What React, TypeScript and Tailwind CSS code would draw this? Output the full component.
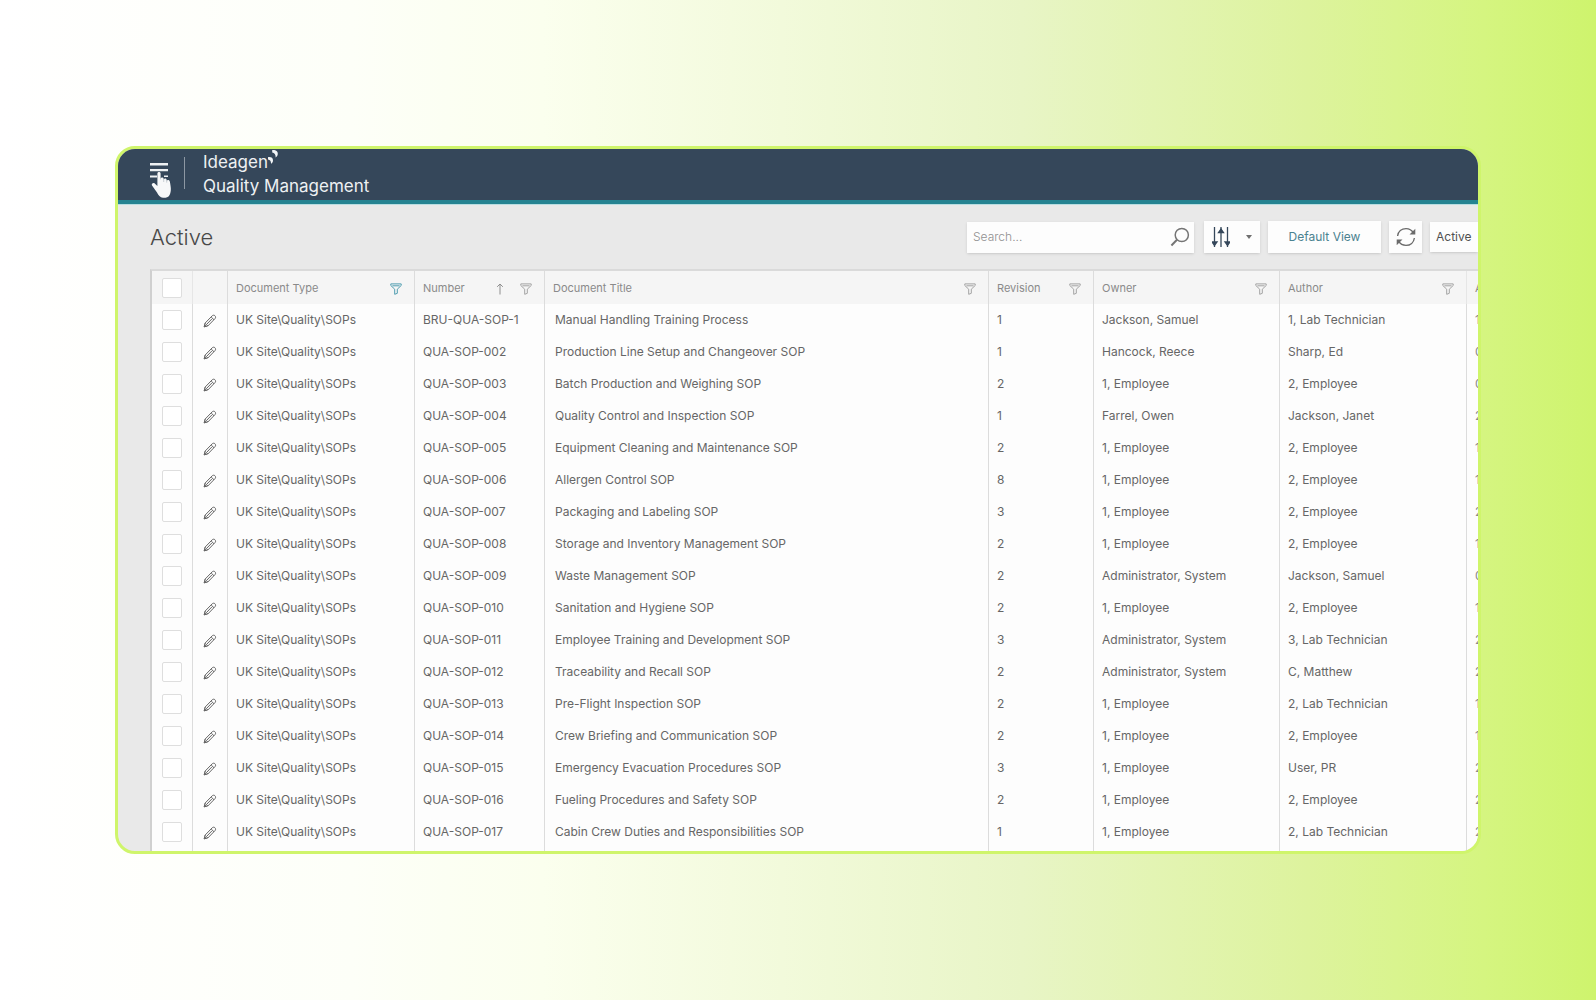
import type { ReactNode } from "react";

type Row = [title: string, revision: string, owner: string, author: string, next: string];

const rows: Row[] = [
  ["Manual Handling Training Process", "1", "Jackson, Samuel", "1, Lab Technician", "1"],
  ["Production Line Setup and Changeover SOP", "1", "Hancock, Reece", "Sharp, Ed", "0"],
  ["Batch Production and Weighing SOP", "2", "1, Employee", "2, Employee", "0"],
  ["Quality Control and Inspection SOP", "1", "Farrel, Owen", "Jackson, Janet", "2"],
  ["Equipment Cleaning and Maintenance SOP", "2", "1, Employee", "2, Employee", "1"],
  ["Allergen Control SOP", "8", "1, Employee", "2, Employee", "1"],
  ["Packaging and Labeling SOP", "3", "1, Employee", "2, Employee", "2"],
  ["Storage and Inventory Management SOP", "2", "1, Employee", "2, Employee", "1"],
  ["Waste Management SOP", "2", "Administrator, System", "Jackson, Samuel", "0"],
  ["Sanitation and Hygiene SOP", "2", "1, Employee", "2, Employee", "1"],
  ["Employee Training and Development SOP", "3", "Administrator, System", "3, Lab Technician", "2"],
  ["Traceability and Recall SOP", "2", "Administrator, System", "C, Matthew", "2"],
  ["Pre-Flight Inspection SOP", "2", "1, Employee", "2, Lab Technician", "1"],
  ["Crew Briefing and Communication SOP", "2", "1, Employee", "2, Employee", "1"],
  ["Emergency Evacuation Procedures SOP", "3", "1, Employee", "User, PR", "2"],
  ["Fueling Procedures and Safety SOP", "2", "1, Employee", "2, Employee", "2"],
  ["Cabin Crew Duties and Responsibilities SOP", "1", "1, Employee", "2, Lab Technician", "2"],
];

const documentNumber = (index: number) =>
  index === 0 ? "BRU-QUA-SOP-1" : `QUA-SOP-${String(index + 1).padStart(3, "0")}`;

function Funnel({ active = false }: { active?: boolean }) {
  return (
    <svg
      viewBox="0 0 12 12"
      className={active ? "size-3 text-[#4f9db0]" : "size-3 text-[#a3a3a3]"}
      fill="none"
      stroke="currentColor"
      aria-hidden="true"
    >
      <path d="M.8.9h10.4v1.6L7.3 6.2v4.1l-2.6 1V6.2L.8 2.5z" />
      <path d="M2.4 2.8h7.2" />
    </svg>
  );
}

function SortArrow() {
  return (
    <svg viewBox="0 0 8 12" className="h-3 w-2 text-[#8e8e8e]" fill="none" stroke="currentColor" aria-hidden="true">
      <path d="M4 11.5V1M1.2 3.8 4 1l2.8 2.8" />
    </svg>
  );
}

function Pencil() {
  return (
    <svg viewBox="0 0 14 14" className="size-3.5" fill="none" stroke="currentColor" strokeLinejoin="round" aria-hidden="true">
      <path d="M1.2 12.8 2 9.2l7.2-7.4c.8-.8 2-.8 2.8 0s.8 2 0 2.8L4.8 12z" />
      <path d="m8.2 3 2.8 2.8M4 10l5-5.2M2 9.2 4.8 12" />
      <path d="m1.2 12.8.5-1.9 1.5 1.4z" fill="currentColor" />
    </svg>
  );
}

function MenuWithPointer() {
  return (
    <svg viewBox="0 0 22 36" className="h-9 w-[22px]" aria-hidden="true">
      <path d="M0 0h18v2.4H0zM0 6h18v2.2H0zM0 12.4h7v2.2H0zM14 12.4h4v1.6h-4z" fill="#eef1f3" />
      <path
        d="M7.4 10.5c0-2 3.2-2 3.2 0v6.6l.2-1.6c.2-1.5 2.7-1.4 2.8.1l.2.8c.4-1.3 2.6-1.1 2.8.3l.2.9c.6-1.1 2.8-.8 3 .9 1 5 1.900 9.500-.2 13.400-1.400 2.600-4.400 3.200-6.600 2.900-3-.3-4.600-2.400-6-5.200l-5-7.200c-1-1.600 1.400-3.200 2.700-2l2.700 2.700z"
        fill="#f7f8f9"
      />
      <path d="M13.7 16v3M16.7 17v2.6" stroke="#b4bdc5" strokeWidth=".7" />
    </svg>
  );
}

function BrandMark() {
  return (
    <svg viewBox="0 0 10 14" className="h-3.5 w-2.5" fill="#f2f5f7" aria-hidden="true">
      <path d="M4.2 0c3.4-.4 5.700 1 5.600 3.800C9.700 5.600 9 6.700 7.600 7.400 7.800 4.600 6.800 3 4.200 2.400z" />
      <path d="M0 7.200c3.200-.4 5.100.800 5 3.200-.1 1.700-.8 2.800-2 3.400.1-2.400-.8-3.800-3-4.200z" />
    </svg>
  );
}

function Magnifier() {
  return (
    <svg viewBox="0 0 20 20" className="size-5 text-[#757575]" fill="none" stroke="currentColor" strokeWidth="1.5" aria-hidden="true">
      <circle cx="11.8" cy="8" r="6.6" />
      <path d="m7 12.8-5.6 5.7" strokeWidth="2" />
    </svg>
  );
}

function Sliders() {
  return (
    <svg viewBox="0 0 18 22" className="h-[22px] w-[18px] text-[#35475a]" fill="none" stroke="currentColor" strokeWidth="1.3" aria-hidden="true">
      <path d="M2.5 1v20M9 1v20M15.5 1v20" />
      <path d="M0 16h5l-2.5 3.5zM6.5 6.5h5L9 3zM13 16h5l-2.5 3.5z" fill="currentColor" />
    </svg>
  );
}

function Refresh() {
  return (
    <svg viewBox="0 0 20 20" className="size-5 text-[#6b6b6b]" fill="none" stroke="currentColor" strokeWidth="1.4" aria-hidden="true">
      <path d="M1.6 9C2.2 4.6 5.6 1.6 10 1.6c3.3 0 5.8 1.5 7.4 4.2M18.4 11c-.6 4.4-4 7.4-8.4 7.4-3.3 0-5.8-1.5-7.4-4.2" />
      <path d="M18.6 3.400v3.400h-3.400zM1.400 16.600v-3.400h3.400z" fill="currentColor" />
    </svg>
  );
}

function HeaderCell({ label, children }: { label: string; children?: ReactNode }) {
  return (
    <th scope="col" className="border-l border-[#dcdcdc] pt-0.5 pl-2 pr-3 font-normal">
      <div className="flex items-center justify-between">
        <span>{label}</span>
        <span className="flex items-center gap-4">{children}</span>
      </div>
    </th>
  );
}

const checkbox =
  "block size-5 appearance-none rounded-xs border border-[#dedede] bg-white checked:bg-[#2f8796]";

export default function App() {
  return (
    <main className="min-h-screen bg-[linear-gradient(90deg,#ffffff_0%,#fdfff8_22%,#fbffee_34%,#f2fadb_49%,#e8f5c6_64%,#ddf39d_82%,#d5f580_93%,#cef46d_100%)] px-[115px] py-[146px] font-['Inter',sans-serif]">
      <section className="overflow-hidden rounded-[20px] border-[3px] border-[#cff56b] bg-[#e9e9e9]">
        <header className="flex h-[55px] items-center border-b-4 border-[#258391] bg-[#35475a] pl-8 text-[#eef1f3]">
          <button type="button" aria-label="Menu" className="mt-3">
            <MenuWithPointer />
          </button>
          <div className="ml-3 mb-1 h-8 w-px bg-[#8d98a3]" />
          <div className="ml-[18px] mb-0.5 text-[17px] leading-6">
            <div className="flex">
              <span>Ideagen</span>
              <BrandMark />
            </div>
            <div>Quality Management</div>
          </div>
        </header>

        <div className="flex h-[65px] items-center border-t border-[#b9dde1] pl-8">
          <h1 className="text-[22px] font-light text-[#484848]">Active</h1>
          <div className="ml-auto flex items-center">
            <div className="flex h-[31px] w-[227px] items-center bg-[#fdfdfd] pl-1.5 pr-1 shadow-sm">
              <input
                type="search"
                aria-label="Search"
                placeholder="Search..."
                className="min-w-0 flex-1 bg-transparent text-[12px] font-light outline-none placeholder:text-[#909090]"
              />
              <button type="button" aria-label="Run search">
                <Magnifier />
              </button>
            </div>
            <button type="button" aria-label="Filter options" className="ml-2.5 flex h-8 w-14 items-center justify-between bg-[#fdfdfd] px-2 shadow-sm">
              <Sliders />
              <svg viewBox="0 0 6 4" className="h-1 w-1.5" fill="#6f6f6f" aria-hidden="true">
                <path d="M0 0h6L3 4z" />
              </svg>
            </button>
            <button type="button" className="ml-2 h-8 w-[113px] bg-[#fdfdfd] text-[12px] text-[#4b8290] shadow-sm">
              Default View
            </button>
            <button type="button" aria-label="Refresh" className="ml-2 flex h-8 w-[33px] items-center justify-center bg-[#fdfdfd] shadow-sm">
              <Refresh />
            </button>
            <select aria-label="Status" className="ml-2 h-[30px] w-12 appearance-none bg-[#fdfdfd] pl-1.5 text-[12px] text-[#505050] shadow-sm">
              <option>Active</option>
            </select>
          </div>
        </div>

        <div className="pl-8">
          <table className="w-full table-fixed border-separate border-spacing-0 border-l-2 border-t-2 border-l-[#d0d0d0] border-t-[#dadada] bg-[#fdfdfd] text-left whitespace-nowrap">
            <colgroup>
              <col className="w-10" />
              <col className="w-[35px]" />
              <col className="w-[187px]" />
              <col className="w-[130px]" />
              <col />
              <col className="w-[105px]" />
              <col className="w-[186px]" />
              <col className="w-[187px]" />
              <col className="w-3" />
            </colgroup>
            <thead className="bg-[#f5f5f5] text-[11px] text-[#8a8a8a]">
              <tr className="h-[33px]">
                <th scope="col" className="pl-2.5">
                  <input type="checkbox" aria-label="Select all documents" className={checkbox} />
                </th>
                <th scope="col" aria-label="Edit" className="border-l border-[#e6e6e6]" />
                <HeaderCell label="Document Type"><Funnel active /></HeaderCell>
                <HeaderCell label="Number"><SortArrow /><Funnel /></HeaderCell>
                <HeaderCell label="Document Title"><Funnel /></HeaderCell>
                <HeaderCell label="Revision"><Funnel /></HeaderCell>
                <HeaderCell label="Owner"><Funnel /></HeaderCell>
                <HeaderCell label="Author"><Funnel /></HeaderCell>
                <th scope="col" className="border-l border-[#e6e6e6] pt-0.5 pl-2 font-normal">A</th>
              </tr>
            </thead>
            <tbody className="text-[12px] text-[#666666] [&_td]:border-[#dcdcdc] [&_td+td]:border-l [&>tr:last-child>td]:pb-[3px]">
              {rows.map(([title, revision, owner, author, next], index) => (
                <tr key={title} className="h-8 last:h-[35px]">
                  <td className="pl-2.5">
                    <input type="checkbox" aria-label={`Select ${title}`} className={checkbox} />
                  </td>
                  <td className="pl-2.5">
                    <button type="button" aria-label={`Edit ${title}`} className="block pt-0.5">
                      <Pencil />
                    </button>
                  </td>
                  <td className="pl-2">UK Site\Quality\SOPs</td>
                  <td className="pl-2">{documentNumber(index)}</td>
                  <td className="pl-2.5">{title}</td>
                  <td className="pl-2">{revision}</td>
                  <td className="pl-2">{owner}</td>
                  <td className="pl-2">{author}</td>
                  <td className="pl-2 text-[#8a8a8a]">{next}</td>
                </tr>
              ))}
            </tbody>
          </table>
        </div>
      </section>
    </main>
  );
}
